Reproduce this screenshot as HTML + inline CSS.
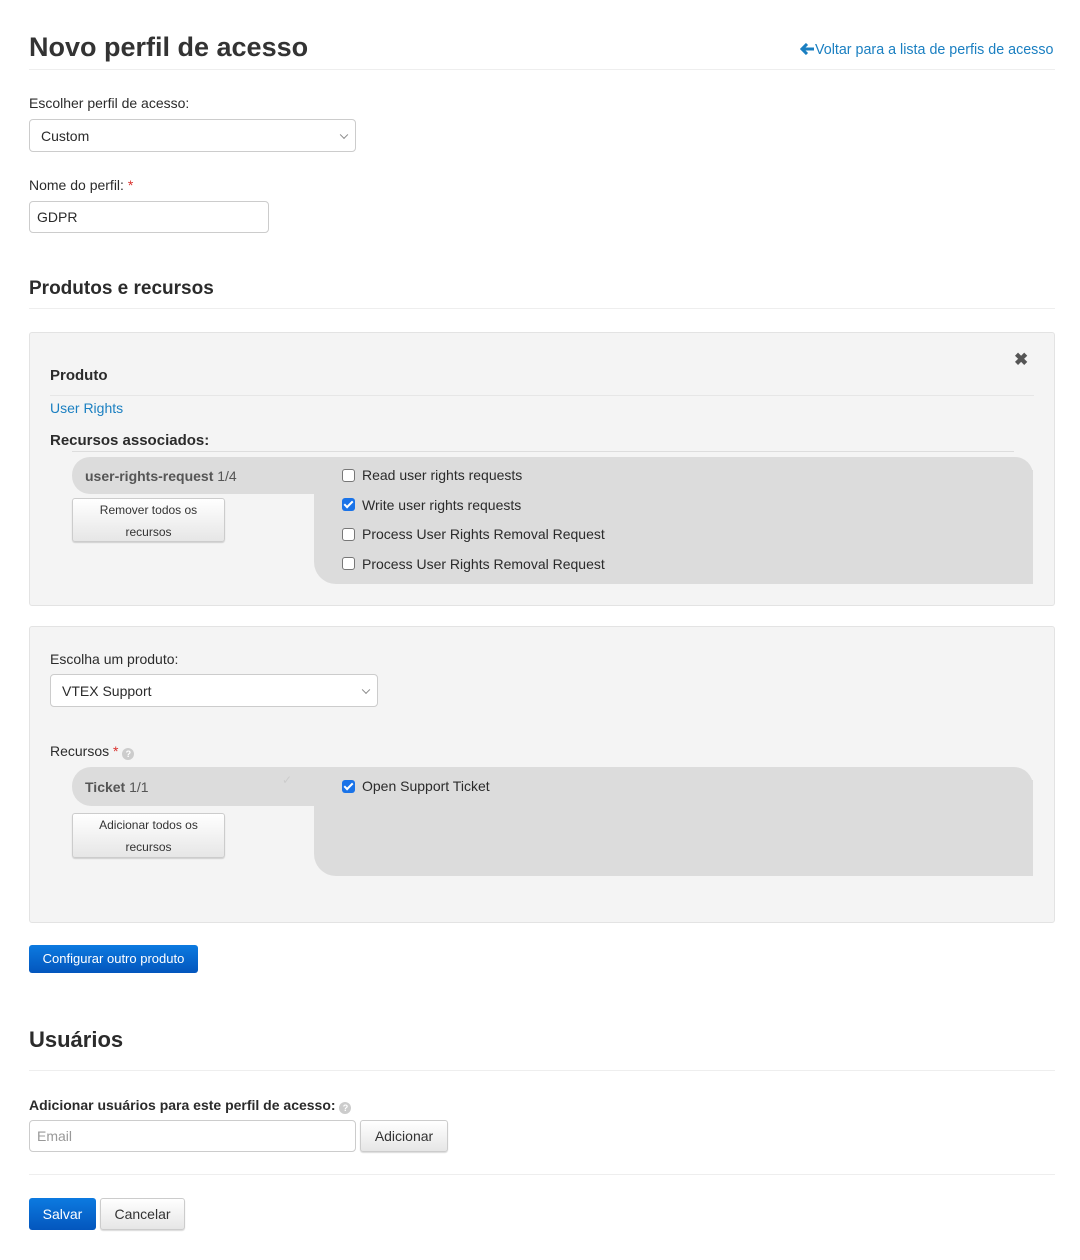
<!DOCTYPE html>
<html><head><meta charset="utf-8"><style>
*{box-sizing:border-box;margin:0;padding:0}
body{width:1080px;height:1260px;background:#fff;font-family:"Liberation Sans",Arial,sans-serif;color:#2b2b2b;font-size:14px;position:relative;overflow:hidden}
.a{position:absolute}
.hr{position:absolute;height:1px;background:#eee}
.inp{position:absolute;border:1px solid #ccc;border-radius:4px;background:#fff;font-size:14px;padding-left:11px;display:flex;align-items:center}
.chev{position:absolute;right:8px;top:50%;width:6px;height:6px;border-right:1px solid #888;border-bottom:1px solid #888;transform:translateY(-70%) rotate(45deg)}
.well{position:absolute;background:#f4f4f4;border:1px solid #e3e3e3;border-radius:3px}
.gray{background:#dcdcdc;position:absolute}
.cb{position:absolute;width:13px;height:13px;border:1px solid #777;border-radius:3px;background:#fff}
.cbc{position:absolute;width:13px;height:13px;border-radius:3px;background:#1a73e8}
.cbc:after{content:"";position:absolute;left:4px;top:1px;width:3px;height:7px;border-right:2px solid #fff;border-bottom:2px solid #fff;transform:rotate(45deg)}
.btn{position:absolute;border:1px solid #ccc;border-radius:3px;background:linear-gradient(#fff,#e6e6e6);font-size:12px;color:#333;text-align:center;line-height:22px;box-shadow:0 1px 1px rgba(0,0,0,.15)}
.bb{position:absolute;border-radius:3px;background:linear-gradient(#0c7ae0,#0356bd);color:#fff;text-align:center}
.q{display:inline-block;width:12px;height:12px;border-radius:50%;background:#ccc;color:#fff;font-size:9px;line-height:12px;text-align:center;font-weight:bold;vertical-align:-1px}
.red{color:#d9302c}
</style></head><body>
<div class="a" style="left:29px;top:32px;font-size:27px;font-weight:bold;color:#333">Novo perfil de acesso</div>
<div class="a" style="left:800px;top:42px;font-size:14.3px;color:#1a7fc1;white-space:nowrap"><svg width="15" height="12" viewBox="0 0 15 12" style="vertical-align:-1px"><path d="M7 1L2 6l5 5M2 6h12" stroke="#1a7fc1" stroke-width="3" fill="none"/></svg>Voltar para a lista de perfis de acesso</div>
<div class="hr" style="left:29px;top:69px;width:1026px"></div>

<div class="a" style="left:29px;top:95px">Escolher perfil de acesso:</div>
<div class="inp" style="left:29px;top:119px;width:327px;height:33px">Custom<span class="chev"></span></div>
<div class="a" style="left:29px;top:177px">Nome do perfil: <span class="red">*</span></div>
<div class="inp" style="left:29px;top:201px;width:240px;height:32px;padding-left:7px">GDPR</div>

<div class="a" style="left:29px;top:278px;font-size:19px;font-weight:bold">Produtos e recursos</div>
<div class="hr" style="left:29px;top:308px;width:1026px"></div>

<div class="well" style="left:29px;top:332px;width:1026px;height:274px"></div>
<div class="a" style="left:1014px;top:350px;font-size:17px;font-weight:bold;color:#555">&#10006;</div>
<div class="a" style="left:50px;top:367px;font-weight:bold;font-size:15px">Produto</div>
<div class="hr" style="left:50px;top:395px;width:984px;background:#e6e6e6"></div>
<div class="a" style="left:50px;top:400px;color:#1a7fc1">User Rights</div>
<div class="a" style="left:50px;top:432px;font-weight:bold;font-size:15px">Recursos associados:</div>
<div class="hr" style="left:72px;top:451px;width:942px;background:#ddd"></div>
<div class="gray" style="left:72px;top:457px;width:961px;height:37px;border-radius:18px 18px 0 18px"></div>
<div class="gray" style="left:314px;top:470px;width:719px;height:114px;border-radius:0 0 0 22px"></div>
<div class="a" style="left:85px;top:468px;color:#555"><b>user-rights-request</b> 1/4</div>
<div class="btn" style="left:72px;top:498px;width:153px;height:44px">Remover todos os<br>recursos</div>
<div class="cb" style="left:342px;top:469px"></div><div class="a" style="left:362px;top:467px">Read user rights requests</div>
<div class="cbc" style="left:342px;top:498px"></div><div class="a" style="left:362px;top:497px">Write user rights requests</div>
<div class="cb" style="left:342px;top:528px"></div><div class="a" style="left:362px;top:526px">Process User Rights Removal Request</div>
<div class="cb" style="left:342px;top:557px"></div><div class="a" style="left:362px;top:556px">Process User Rights Removal Request</div>

<div class="well" style="left:29px;top:626px;width:1026px;height:297px"></div>
<div class="a" style="left:50px;top:651px">Escolha um produto:</div>
<div class="inp" style="left:50px;top:674px;width:328px;height:33px">VTEX Support<span class="chev"></span></div>
<div class="a" style="left:50px;top:743px">Recursos <span class="red">*</span> <span class="q">?</span></div>
<div class="gray" style="left:72px;top:767px;width:961px;height:39px;border-radius:19px 19px 0 19px"></div>
<div class="gray" style="left:314px;top:780px;width:719px;height:96px;border-radius:0 0 0 22px"></div>
<div class="a" style="left:85px;top:779px;color:#555"><b>Ticket</b> 1/1</div>
<div class="a" style="left:282px;top:773px;color:#ccc;font-size:12px">&#10003;</div>
<div class="btn" style="left:72px;top:813px;width:153px;height:45px">Adicionar todos os<br>recursos</div>
<div class="cbc" style="left:342px;top:780px"></div><div class="a" style="left:362px;top:778px">Open Support Ticket</div>

<div class="bb" style="left:29px;top:945px;width:169px;height:28px;font-size:13px;line-height:28px">Configurar outro produto</div>

<div class="a" style="left:29px;top:1027px;font-size:22px;font-weight:bold">Usuários</div>
<div class="hr" style="left:29px;top:1070px;width:1026px"></div>
<div class="a" style="left:29px;top:1097px;font-weight:bold">Adicionar usuários para este perfil de acesso: <span class="q">?</span></div>
<div class="inp" style="left:29px;top:1120px;width:327px;height:32px;color:#999;padding-left:7px">Email</div>
<div class="btn" style="left:360px;top:1120px;width:88px;height:32px;font-size:14px;line-height:30px">Adicionar</div>
<div class="hr" style="left:29px;top:1174px;width:1026px"></div>
<div class="bb" style="left:29px;top:1198px;width:67px;height:32px;font-size:14px;line-height:32px">Salvar</div>
<div class="btn" style="left:100px;top:1198px;width:85px;height:32px;font-size:14px;line-height:30px">Cancelar</div>
</body></html>
